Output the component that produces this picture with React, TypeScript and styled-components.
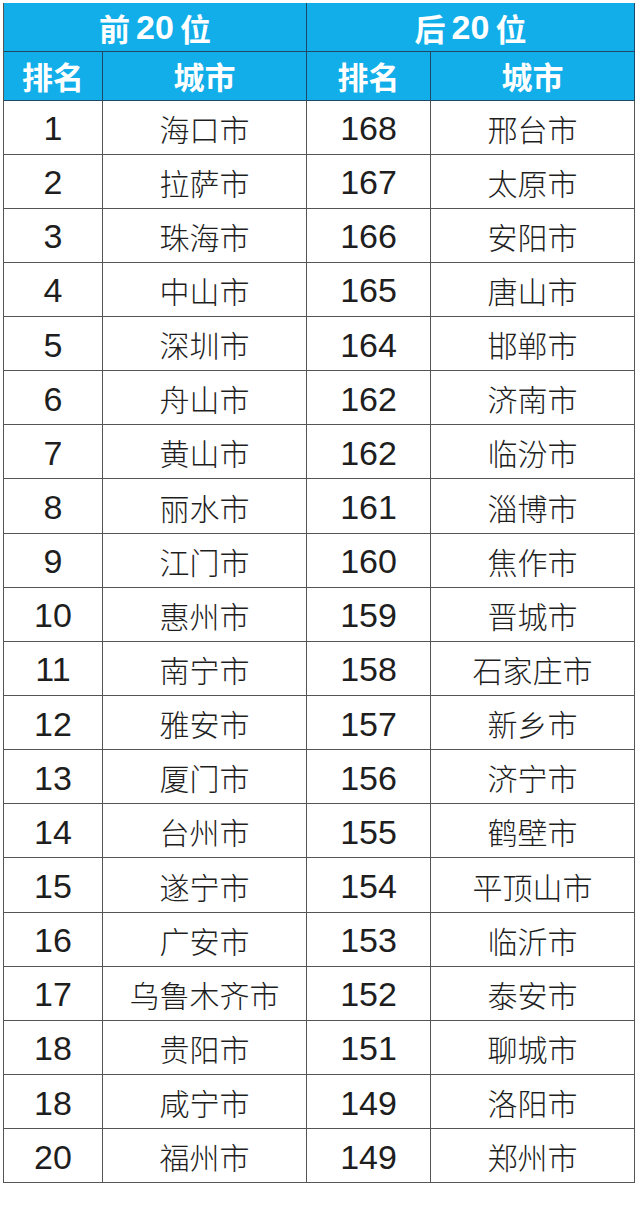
import * as React from 'react';
import styled, {createGlobalStyle} from 'styled-components';

const headBlue = '#12aeea';
const headLine = '#1d4866';
const bodyLine = '#555';

const GlobalStyle = createGlobalStyle`
	html, body {
		margin: 0;
		padding: 0;
		background: #fff;
	}
	body {
		font-family: "Liberation Sans", "Noto Sans CJK SC", sans-serif;
	}
`;

const Page = styled.div`
	padding: 3px 6px 38px 3px;
	width: 640px;
	box-sizing: border-box;
`;

const Grid = styled.div`
	display: grid;
	grid-template-columns: 99px 204px 124px 204px;
	border-left: 1.5px solid ${bodyLine};
`;

const HeadCell = styled.div<{span?: number; tall?: boolean}>`
	grid-column: span ${props => props.span || 1};
	height: ${props => props.tall ? 49 : 48.5}px;
	box-sizing: border-box;
	background: ${headBlue};
	border-right: 1.5px solid ${headLine};
	border-bottom: 1.5px solid ${headLine};
	display: flex;
	align-items: center;
	justify-content: center;
	color: #fff;
	font-weight: bold;
	font-family: "Liberation Sans", "Noto Sans CJK SC", sans-serif;
	font-size: 31px;
	white-space: pre;
`;

const Digits = styled.span`
	font-size: 34px;
	margin: 0 6px;
`;

const Cell = styled.div<{num?: boolean}>`
	height: 54.15px;
	box-sizing: border-box;
	border-right: 1.5px solid ${bodyLine};
	border-bottom: 1.5px solid ${bodyLine};
	display: flex;
	align-items: center;
	justify-content: center;
	color: #1e1e1e;
	font-family: ${props => props.num
		? '"Liberation Sans", sans-serif'
		: '"Noto Sans CJK SC", sans-serif'};
	font-size: ${props => props.num ? 34 : 30}px;
	font-weight: ${props => props.num ? 400 : 300};
	padding-top: ${props => props.num ? 3 : 1}px;
`;

const rows: [string, string, string, string][] = [
	['1', '海口市', '168', '邢台市'],
	['2', '拉萨市', '167', '太原市'],
	['3', '珠海市', '166', '安阳市'],
	['4', '中山市', '165', '唐山市'],
	['5', '深圳市', '164', '邯郸市'],
	['6', '舟山市', '162', '济南市'],
	['7', '黄山市', '162', '临汾市'],
	['8', '丽水市', '161', '淄博市'],
	['9', '江门市', '160', '焦作市'],
	['10', '惠州市', '159', '晋城市'],
	['11', '南宁市', '158', '石家庄市'],
	['12', '雅安市', '157', '新乡市'],
	['13', '厦门市', '156', '济宁市'],
	['14', '台州市', '155', '鹤壁市'],
	['15', '遂宁市', '154', '平顶山市'],
	['16', '广安市', '153', '临沂市'],
	['17', '乌鲁木齐市', '152', '泰安市'],
	['18', '贵阳市', '151', '聊城市'],
	['18', '咸宁市', '149', '洛阳市'],
	['20', '福州市', '149', '郑州市'],
];

export default function App() {
	return (
		<Page>
			<GlobalStyle />
			<Grid>
				<HeadCell span={2} tall>前<Digits>20</Digits>位</HeadCell>
				<HeadCell span={2} tall>后<Digits>20</Digits>位</HeadCell>
				<HeadCell>排名</HeadCell>
				<HeadCell>城市</HeadCell>
				<HeadCell>排名</HeadCell>
				<HeadCell>城市</HeadCell>
				{rows.map((r, i) => (
					<React.Fragment key={i}>
						<Cell num>{r[0]}</Cell>
						<Cell>{r[1]}</Cell>
						<Cell num>{r[2]}</Cell>
						<Cell>{r[3]}</Cell>
					</React.Fragment>
				))}
			</Grid>
		</Page>
	);
}
